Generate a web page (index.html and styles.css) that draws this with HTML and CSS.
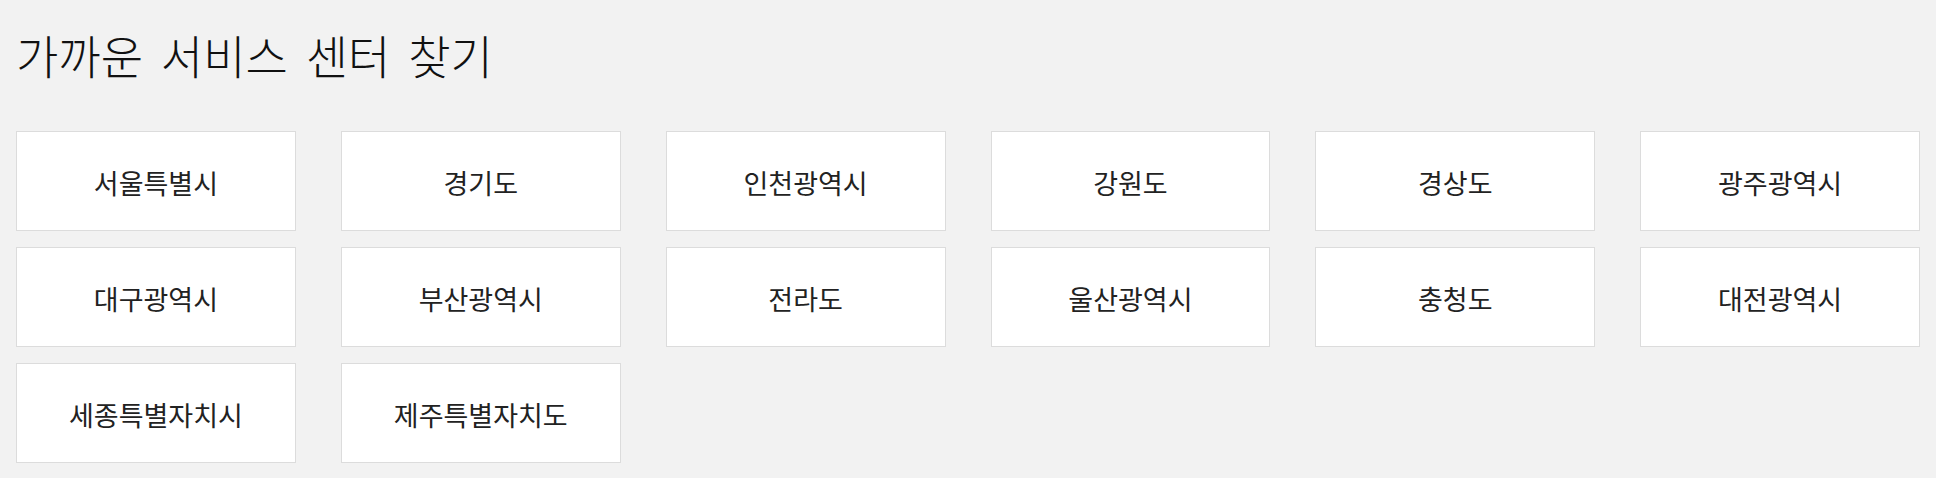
FILE: index.html
```html
<!DOCTYPE html>
<html lang="ko">
<head>
<meta charset="utf-8">
<title>가까운 서비스 센터 찾기</title>
<link rel="stylesheet" href="styles.css">
</head>
<body>
<main class="page">
  <h1 class="title">가까운 서비스 센터 찾기</h1>
  <ul class="regions">
    <li class="region"><a class="region-link" href="#">서울특별시</a></li>
    <li class="region"><a class="region-link" href="#">경기도</a></li>
    <li class="region"><a class="region-link" href="#">인천광역시</a></li>
    <li class="region"><a class="region-link" href="#">강원도</a></li>
    <li class="region"><a class="region-link" href="#">경상도</a></li>
    <li class="region"><a class="region-link" href="#">광주광역시</a></li>
    <li class="region"><a class="region-link" href="#">대구광역시</a></li>
    <li class="region"><a class="region-link" href="#">부산광역시</a></li>
    <li class="region"><a class="region-link" href="#">전라도</a></li>
    <li class="region"><a class="region-link" href="#">울산광역시</a></li>
    <li class="region"><a class="region-link" href="#">충청도</a></li>
    <li class="region"><a class="region-link" href="#">대전광역시</a></li>
    <li class="region"><a class="region-link" href="#">세종특별자치시</a></li>
    <li class="region"><a class="region-link" href="#">제주특별자치도</a></li>
  </ul>
</main>
</body>
</html>
```

FILE: styles.css
```css
html, body {
  margin: 0;
  padding: 0;
  background: #f2f2f2;
}

body {
  font-family: "Noto Sans CJK KR", "Noto Sans", sans-serif;
  color: #111;
}

.page {
  padding: 0 16px;
}

.title {
  margin: 23px 0 45px 0;
  font-size: 46px;
  line-height: 63px;
  font-weight: 300;
  word-spacing: 5px;
  color: #111;
}

.regions {
  list-style: none;
  margin: 0;
  padding: 0;
  display: grid;
  grid-template-columns: repeat(6, 1fr);
  column-gap: 45px;
  row-gap: 16px;
}

.region {
  margin: 0;
}

.region-link {
  box-sizing: border-box;
  display: flex;
  align-items: center;
  justify-content: center;
  height: 100px;
  background: #fff;
  border: 1px solid #dcdcdc;
  color: #222;
  text-decoration: none;
  font-size: 27px;
  font-weight: 400;
  padding-top: 2px;
}
```
